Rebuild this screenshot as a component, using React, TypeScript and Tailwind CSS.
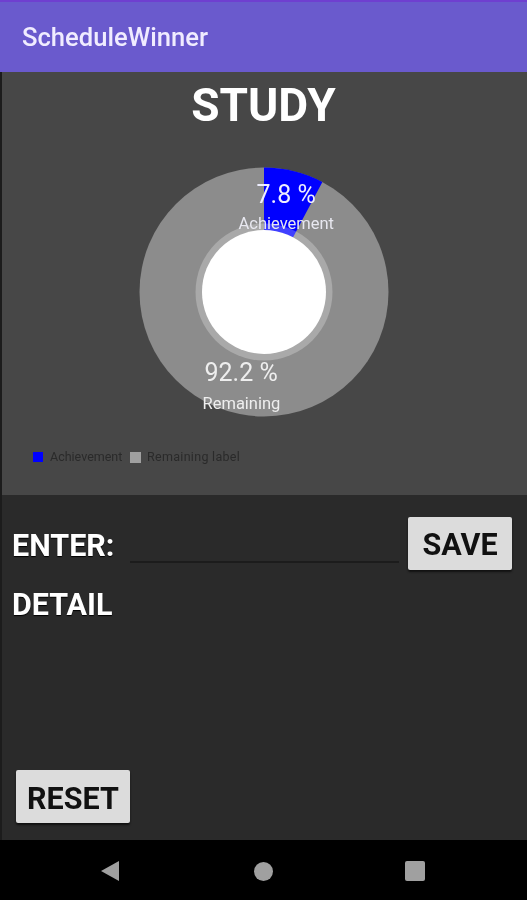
export default function App() {
  const font = { fontFamily: "Roboto, 'Liberation Sans', sans-serif" };
  return (
    <div className="w-[527px] h-[900px] flex flex-col overflow-hidden bg-black blur-[0.5px]" style={font}>
      <header className="h-[72px] shrink-0 bg-[#6a5acd] border-t-2 border-[#6f3fd0] pl-[22px] pt-[2px] flex items-center">
        <h1 className="text-[25.6px] leading-none font-medium text-[#f0ecff]">ScheduleWinner</h1>
      </header>
      <main className="flex-1 flex flex-col border-l-2 border-[#1c1c1c]">
        <section className="h-[423px] shrink-0 bg-[#474747] flex flex-col items-center">
          <h2 className="text-[46px] leading-[52px] mt-[7px] font-bold text-white mr-[2px]">STUDY</h2>
          <div className="relative w-[250px] h-[250px] mt-[36px] mr-[2px]">
            <svg viewBox="0 0 250 250" className="w-full h-full">
              <circle cx="125" cy="125" r="124.5" fill="#8c8c8c" />
              <path d="M125 125 L125 0.5 A124.5 124.5 0 0 1 183.4 15 Z" fill="#0000ff" />
              <circle cx="125" cy="125" r="68.5" fill="#ffffff" fillOpacity="0.25" />
              <circle cx="125" cy="125" r="62" fill="#ffffff" />
            </svg>
            <span className="absolute left-[118px] top-[13px] text-[25px] leading-[30px] text-[#eeeeff] whitespace-nowrap">7.8 %</span>
            <span className="absolute left-[100px] top-[47px] text-[16.5px] leading-[20px] text-[#e8e8f0] whitespace-nowrap">Achievement</span>
            <span className="absolute left-[66px] top-[191px] text-[25px] leading-[30px] text-[#eeeeee] whitespace-nowrap">92.2 %</span>
            <span className="absolute left-[64px] top-[227px] text-[16.5px] leading-[20px] text-[#eeeeee] whitespace-nowrap">Remaining</span>
          </div>
          <div className="self-start flex items-center mt-[32px] ml-[31px] text-[12.5px] leading-[16px] text-[#2a2a2a]">
            <span className="w-[10px] h-[10px] bg-[#0000ff]" />
            <span className="ml-[7px] w-[73px] whitespace-nowrap">Achievement</span>
            <span className="ml-[7px] w-[11px] h-[11px] bg-[#a0a0a0]" />
            <span className="ml-[6px] whitespace-nowrap tracking-[0.3px]">Remaining label</span>
          </div>
        </section>
        <section className="flex-1 bg-[#2a2a2a] flex flex-col relative">
          <div className="flex items-start pl-[10px] pt-[22px]">
            <span className="text-[30.5px] leading-[58px] font-bold text-white w-[118px] [text-shadow:0_1px_1px_#000]">ENTER:</span>
            <div className="w-[269px] h-[46px] border-b-2 border-[#1c1c1c]" />
            <button className="ml-[9px] w-[104px] h-[53px] pt-[3px] rounded-[2px] bg-[#dcdcdc] shadow-[0_2px_2px_#111] text-[30.5px] font-bold text-[#111] flex items-center justify-center">SAVE</button>
          </div>
          <div className="pl-[10px] mt-[10px] text-[30.5px] leading-[40px] font-bold text-white [text-shadow:0_1px_1px_#000]">DETAIL</div>
          <button className="mt-auto mb-[17px] ml-[14px] w-[114px] h-[53px] pt-[5px] rounded-[2px] bg-[#dcdcdc] shadow-[0_2px_2px_#111] text-[30.5px] font-bold text-[#111] flex items-center justify-center">RESET</button>
        </section>
      </main>
      <nav className="h-[60px] shrink-0 bg-black flex items-center pt-[2px]">
        <svg viewBox="0 0 20 22" className="w-[20px] h-[22px] ml-[100px]"><path d="M1 11 L19 1 L19 21 Z" fill="#a0a0a0" /></svg>
        <span className="ml-[134px] w-[19px] h-[19px] rounded-full bg-[#a0a0a0]" />
        <span className="ml-[132px] w-[20px] h-[20px] rounded-[2px] bg-[#a0a0a0]" />
      </nav>
    </div>
  );
}
